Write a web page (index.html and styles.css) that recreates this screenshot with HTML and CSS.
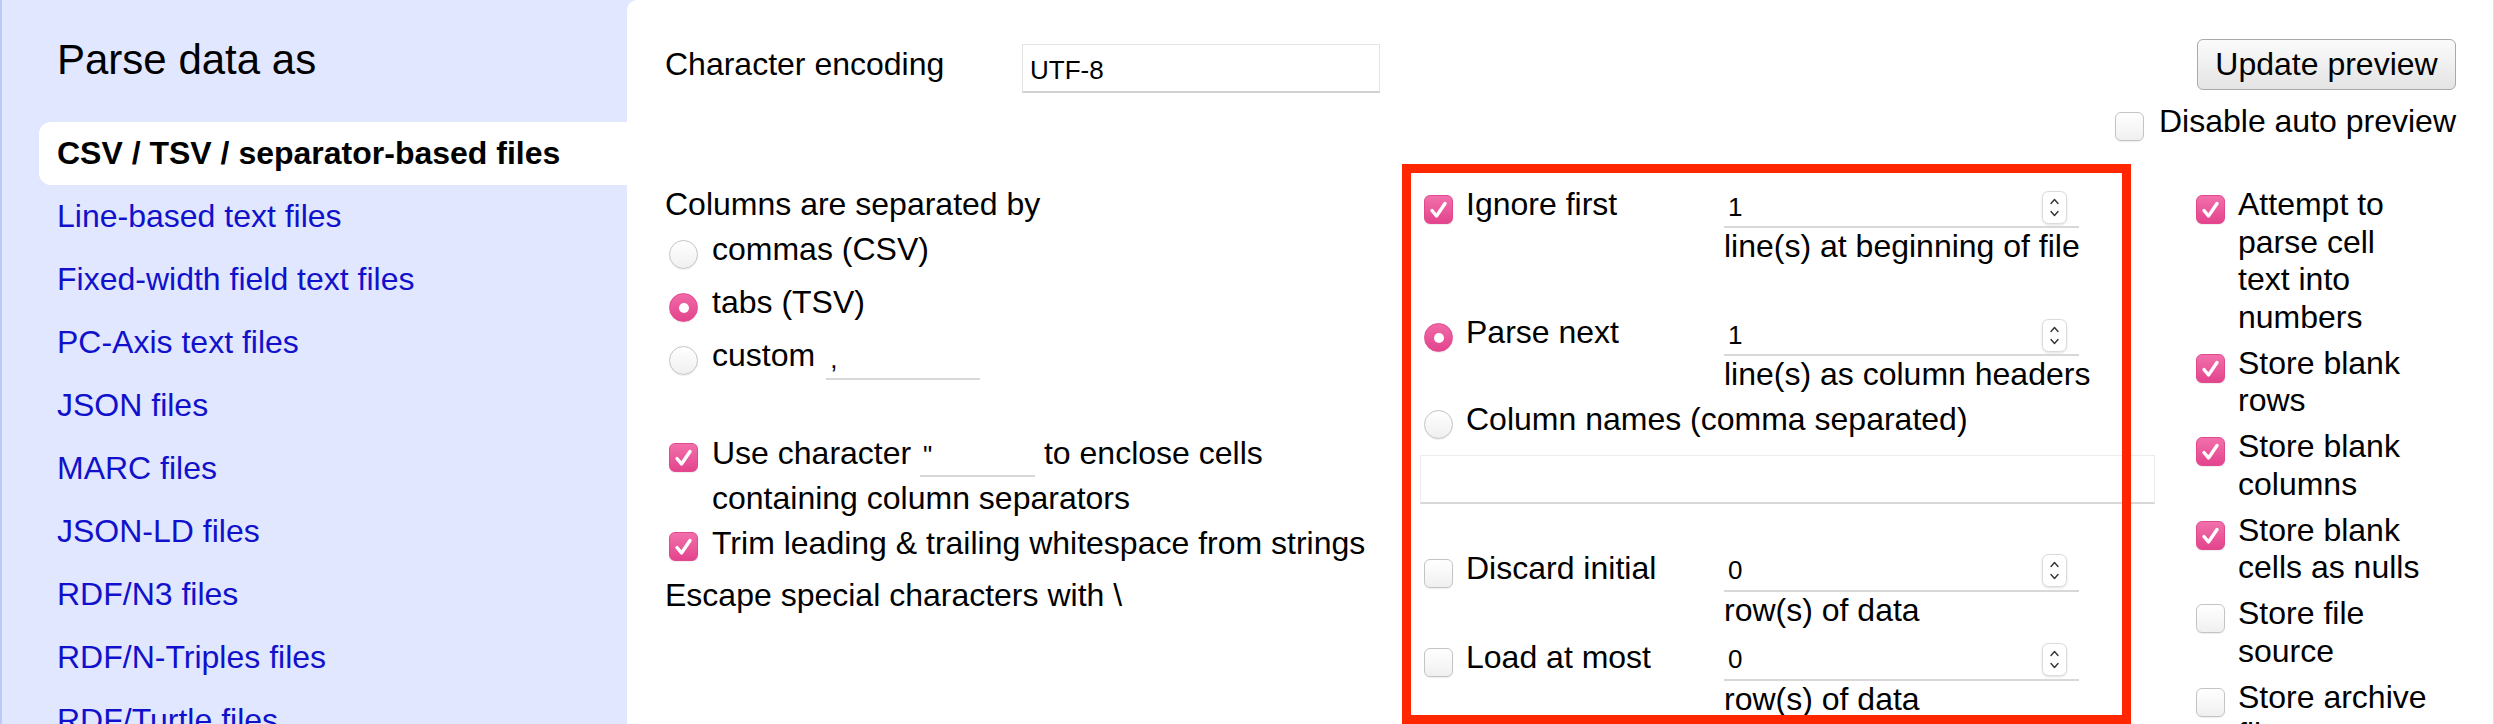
FILE: index.html
```html
<!DOCTYPE html>
<html lang="en">
<head>
<meta charset="utf-8">
<title>Parse data as</title>
<link rel="stylesheet" href="styles.css">
</head>
<body>
<div class="app">
  <aside class="sidebar">
    <h1 class="sidebar-title">Parse data as</h1>
    <ul class="formats">
      <li class="format selected">CSV / TSV / separator-based files</li>
      <li class="format"><a href="#">Line-based text files</a></li>
      <li class="format"><a href="#">Fixed-width field text files</a></li>
      <li class="format"><a href="#">PC-Axis text files</a></li>
      <li class="format"><a href="#">JSON files</a></li>
      <li class="format"><a href="#">MARC files</a></li>
      <li class="format"><a href="#">JSON-LD files</a></li>
      <li class="format"><a href="#">RDF/N3 files</a></li>
      <li class="format"><a href="#">RDF/N-Triples files</a></li>
      <li class="format"><a href="#">RDF/Turtle files</a></li>
    </ul>
  </aside>

  <main class="panel">
    <div class="top-row">
      <div class="encoding">
        <span class="enc-label">Character encoding</span>
        <input class="enc-input" type="text" value="UTF-8">
      </div>
      <div class="preview-ctl">
        <button class="btn" type="button">Update preview</button>
        <div class="auto-prev"><span class="cb"></span><span>Disable auto preview</span></div>
      </div>
    </div>

    <div class="options">
      <section class="col col-sep">
        <div class="line">Columns are separated by</div>
        <div class="radio-row"><span class="radio"></span><span>commas (CSV)</span></div>
        <div class="radio-row"><span class="radio on"></span><span>tabs (TSV)</span></div>
        <div class="radio-row"><span class="radio"></span><span>custom</span><input class="under custom-sep" type="text" value=","></div>
        <div class="check-para quote-line">
          <span class="cb on"><svg viewBox="0 0 29 29" width="29" height="29"><path d="M8 15.5l4.5 5.5L21 8.5" fill="none" stroke="#fff" stroke-width="3.4" stroke-linecap="round" stroke-linejoin="round"/></svg></span>
          <span class="para-text">Use character <input class="under quote-char" type="text" value="&quot;"> to enclose cells containing column separators</span>
        </div>
        <div class="check-para trim-line">
          <span class="cb on"><svg viewBox="0 0 29 29" width="29" height="29"><path d="M8 15.5l4.5 5.5L21 8.5" fill="none" stroke="#fff" stroke-width="3.4" stroke-linecap="round" stroke-linejoin="round"/></svg></span>
          <span>Trim leading &amp; trailing whitespace from strings</span>
        </div>
        <div class="line escape">Escape special characters with \</div>
      </section>

      <section class="col col-head">
        <div class="opt-row">
          <div class="opt-label"><span class="cb on"><svg viewBox="0 0 29 29" width="29" height="29"><path d="M8 15.5l4.5 5.5L21 8.5" fill="none" stroke="#fff" stroke-width="3.4" stroke-linecap="round" stroke-linejoin="round"/></svg></span><span>Ignore first</span></div>
          <div class="opt-value">
            <div class="num"><span class="num-text">1</span><span class="spin"><svg viewBox="0 0 25 33" width="25" height="33"><rect x="0.5" y="0.5" width="24" height="32" rx="6" fill="#fff" stroke="#dadada"/><path d="M9 12.5l3.5-4 3.5 4M9 20.5l3.5 4 3.5-4" fill="none" stroke="#333" stroke-width="1.4" stroke-linecap="round" stroke-linejoin="round"/></svg></span></div>
            <div class="suffix">line(s) at beginning of file</div>
          </div>
        </div>
        <div class="opt-row parse-row">
          <div class="opt-label"><span class="radio on"></span><span>Parse next</span></div>
          <div class="opt-value">
            <div class="num"><span class="num-text">1</span><span class="spin"><svg viewBox="0 0 25 33" width="25" height="33"><rect x="0.5" y="0.5" width="24" height="32" rx="6" fill="#fff" stroke="#dadada"/><path d="M9 12.5l3.5-4 3.5 4M9 20.5l3.5 4 3.5-4" fill="none" stroke="#333" stroke-width="1.4" stroke-linecap="round" stroke-linejoin="round"/></svg></span></div>
            <div class="suffix">line(s) as column headers</div>
          </div>
        </div>
        <div class="opt-label names-row"><span class="radio"></span><span>Column names (comma separated)</span></div>
        <input class="names-input" type="text" value="">
        <div class="opt-row discard-row">
          <div class="opt-label"><span class="cb"></span><span>Discard initial</span></div>
          <div class="opt-value">
            <div class="num"><span class="num-text">0</span><span class="spin"><svg viewBox="0 0 25 33" width="25" height="33"><rect x="0.5" y="0.5" width="24" height="32" rx="6" fill="#fff" stroke="#dadada"/><path d="M9 12.5l3.5-4 3.5 4M9 20.5l3.5 4 3.5-4" fill="none" stroke="#333" stroke-width="1.4" stroke-linecap="round" stroke-linejoin="round"/></svg></span></div>
            <div class="suffix">row(s) of data</div>
          </div>
        </div>
        <div class="opt-row load-row">
          <div class="opt-label"><span class="cb"></span><span>Load at most</span></div>
          <div class="opt-value">
            <div class="num"><span class="num-text">0</span><span class="spin"><svg viewBox="0 0 25 33" width="25" height="33"><rect x="0.5" y="0.5" width="24" height="32" rx="6" fill="#fff" stroke="#dadada"/><path d="M9 12.5l3.5-4 3.5 4M9 20.5l3.5 4 3.5-4" fill="none" stroke="#333" stroke-width="1.4" stroke-linecap="round" stroke-linejoin="round"/></svg></span></div>
            <div class="suffix">row(s) of data</div>
          </div>
        </div>
      </section>

      <section class="col col-store">
        <div class="check-item"><span class="cb on"><svg viewBox="0 0 29 29" width="29" height="29"><path d="M8 15.5l4.5 5.5L21 8.5" fill="none" stroke="#fff" stroke-width="3.4" stroke-linecap="round" stroke-linejoin="round"/></svg></span><span class="item-text">Attempt to parse cell text into numbers</span></div>
        <div class="check-item"><span class="cb on"><svg viewBox="0 0 29 29" width="29" height="29"><path d="M8 15.5l4.5 5.5L21 8.5" fill="none" stroke="#fff" stroke-width="3.4" stroke-linecap="round" stroke-linejoin="round"/></svg></span><span class="item-text">Store blank rows</span></div>
        <div class="check-item"><span class="cb on"><svg viewBox="0 0 29 29" width="29" height="29"><path d="M8 15.5l4.5 5.5L21 8.5" fill="none" stroke="#fff" stroke-width="3.4" stroke-linecap="round" stroke-linejoin="round"/></svg></span><span class="item-text">Store blank columns</span></div>
        <div class="check-item"><span class="cb on"><svg viewBox="0 0 29 29" width="29" height="29"><path d="M8 15.5l4.5 5.5L21 8.5" fill="none" stroke="#fff" stroke-width="3.4" stroke-linecap="round" stroke-linejoin="round"/></svg></span><span class="item-text">Store blank cells as nulls</span></div>
        <div class="check-item"><span class="cb"></span><span class="item-text">Store file source</span></div>
        <div class="check-item"><span class="cb"></span><span class="item-text">Store archive file</span></div>
      </section>
    </div>

    <div class="highlight"></div>
  </main>
</div>
</body>
</html>
```

FILE: styles.css
```css
* { box-sizing: border-box; }

html, body {
  margin: 0;
  padding: 0;
}

body {
  width: 2494px;
  height: 724px;
  overflow: hidden;
  font-family: "Liberation Sans", Arial, Helvetica, sans-serif;
  font-size: 32px;
  color: #000;
  background: #e0e7fe;
}

.app {
  display: flex;
  height: 724px;
}

/* ---------- sidebar ---------- */
.sidebar {
  flex: 0 0 627px;
  background: #e0e7fe;
  border-left: 2px solid #bccbf6;
  padding-top: 35px;
  overflow: hidden;
}

.sidebar-title {
  margin: 0 0 37px 55px;
  font-size: 42px;
  font-weight: normal;
  line-height: 50px;
}

.formats {
  list-style: none;
  margin: 0;
  padding: 0 0 0 37px;
}

.format {
  height: 63px;
  line-height: 63px;
  padding-left: 18px;
  white-space: nowrap;
}

.format a {
  color: #1111cc;
  text-decoration: none;
}

.format.selected {
  background: #fff;
  border-radius: 12px 0 0 12px;
  font-weight: bold;
}

/* ---------- main panel ---------- */
.panel {
  flex: 1;
  position: relative;
  background: #fff;
  border-top-left-radius: 10px;
  border-right: 1px solid #d9dfec;
  padding: 39px 37px 0 38px;
  overflow: hidden;
}

.top-row {
  display: flex;
  justify-content: space-between;
  align-items: flex-start;
}

.encoding {
  display: flex;
  align-items: flex-start;
}

.enc-label {
  width: 357px;
  margin-top: 7px;
  line-height: 37px;
}

.enc-input {
  width: 358px;
  height: 49px;
  margin: 5px 0 0 0;
  padding: 4px 0 0 7px;
  border: 1px solid #e4e4e4;
  border-bottom: 2px solid #d0d0d0;
  font-family: "Liberation Sans", Arial, sans-serif;
  font-size: 26px;
  color: #000;
  outline: none;
}

.preview-ctl {
  display: flex;
  flex-direction: column;
  align-items: flex-end;
}

.btn {
  width: 259px;
  height: 51px;
  padding: 0;
  border: 1px solid #a9a9a9;
  border-radius: 6px;
  background: linear-gradient(#fbfbfb, #e4e4e4);
  font-family: "Liberation Sans", Arial, sans-serif;
  font-size: 32px;
  color: #000;
}

.auto-prev {
  display: flex;
  align-items: flex-start;
  margin-top: 13px;
  line-height: 37px;
}

.auto-prev .cb {
  margin: 9px 15px 0 0;
}

/* ---------- controls ---------- */
.cb, .radio {
  flex: none;
  display: inline-block;
  width: 29px;
  height: 29px;
  border: 1px solid #c4c4c4;
  background: linear-gradient(#ffffff, #f0f0f0);
  box-shadow: 0 1px 1px rgba(0, 0, 0, 0.07);
}

.cb {
  border-radius: 6px;
}

.cb svg {
  display: block;
  margin: -1px;
}

.cb.on {
  border-color: #e2488e;
  background: linear-gradient(#f270ab, #e3448d);
}

.radio {
  border-radius: 50%;
  position: relative;
}

.radio.on {
  border-color: #e2488e;
  background: linear-gradient(#f06aa7, #e3448d);
}

.radio.on::after {
  content: "";
  position: absolute;
  left: 8.5px;
  top: 8.5px;
  width: 10px;
  height: 10px;
  border-radius: 50%;
  background: #fff;
}

.under {
  border: none;
  border-bottom: 2px solid #d8d8d8;
  background: transparent;
  font-family: "Liberation Sans", Arial, sans-serif;
  font-size: 26px;
  color: #000;
  outline: none;
}

/* ---------- options grid ---------- */
.options {
  display: grid;
  grid-template-columns: 755px 772px 1fr;
  margin-top: 45px;
}

/* column A */
.line {
  line-height: 37px;
}

.radio-row {
  display: flex;
  align-items: flex-start;
  height: 53px;
  line-height: 53px;
}

.radio-row .radio {
  margin: 17px 14px 0 4px;
}

.custom-sep {
  width: 154px;
  height: 40px;
  margin: 11px 0 0 11px;
  padding: 0 4px;
}

.check-para {
  display: flex;
  align-items: flex-start;
}

.quote-line {
  margin-top: 50px;
  line-height: 43px;
}

.quote-line .cb {
  margin: 11px 14px 0 4px;
}

.para-text {
  max-width: 600px;
}

.quote-char {
  width: 115px;
  height: 40px;
  padding: 0 3px;
  vertical-align: baseline;
}

.trim-line {
  margin-top: 5px;
  line-height: 37px;
}

.trim-line .cb {
  margin: 7px 14px 0 4px;
}

.escape {
  margin-top: 15px;
}

/* column B */
.opt-row {
  display: grid;
  grid-template-columns: 304px 370px;
}

.opt-label {
  display: flex;
  align-items: flex-start;
  line-height: 37.5px;
}

.opt-label .cb, .opt-label .radio {
  margin: 9px 13px 0 4px;
}

.opt-value {
  display: flex;
  flex-direction: column;
}

.num {
  display: flex;
  align-items: center;
  justify-content: space-between;
  width: 355px;
  height: 40px;
  margin-top: 2px;
  padding: 0 12px 0 4px;
  border-bottom: 2px solid #d8d8d8;
  font-size: 26px;
}

.spin {
  display: block;
  width: 25px;
  height: 33px;
  filter: drop-shadow(0 1px 1px rgba(0, 0, 0, 0.12));
}

.spin svg {
  display: block;
}

.suffix {
  line-height: 37.5px;
  white-space: nowrap;
}

.parse-row {
  margin-top: 48.5px;
}

.names-row {
  margin-top: 7.5px;
}

.names-input {
  display: block;
  width: 735px;
  height: 49px;
  margin-top: 15.5px;
  border: 1px solid #ececec;
  border-bottom: 2px solid #d8d8d8;
  font-family: "Liberation Sans", Arial, sans-serif;
  font-size: 26px;
  outline: none;
}

.discard-row {
  margin-top: 46px;
}

.load-row {
  margin-top: 9.5px;
}

/* column C */
.check-item {
  display: flex;
  align-items: flex-start;
  line-height: 37.5px;
  margin-bottom: 8.5px;
}

.check-item .cb {
  margin: 9px 13px 0 4px;
}

.item-text {
  width: 192px;
}

/* ---------- annotation overlay ---------- */
.highlight {
  position: absolute;
  left: 775px;
  top: 164px;
  width: 729px;
  height: 560px;
  border: 9px solid #ff2600;
  pointer-events: none;
}
```
